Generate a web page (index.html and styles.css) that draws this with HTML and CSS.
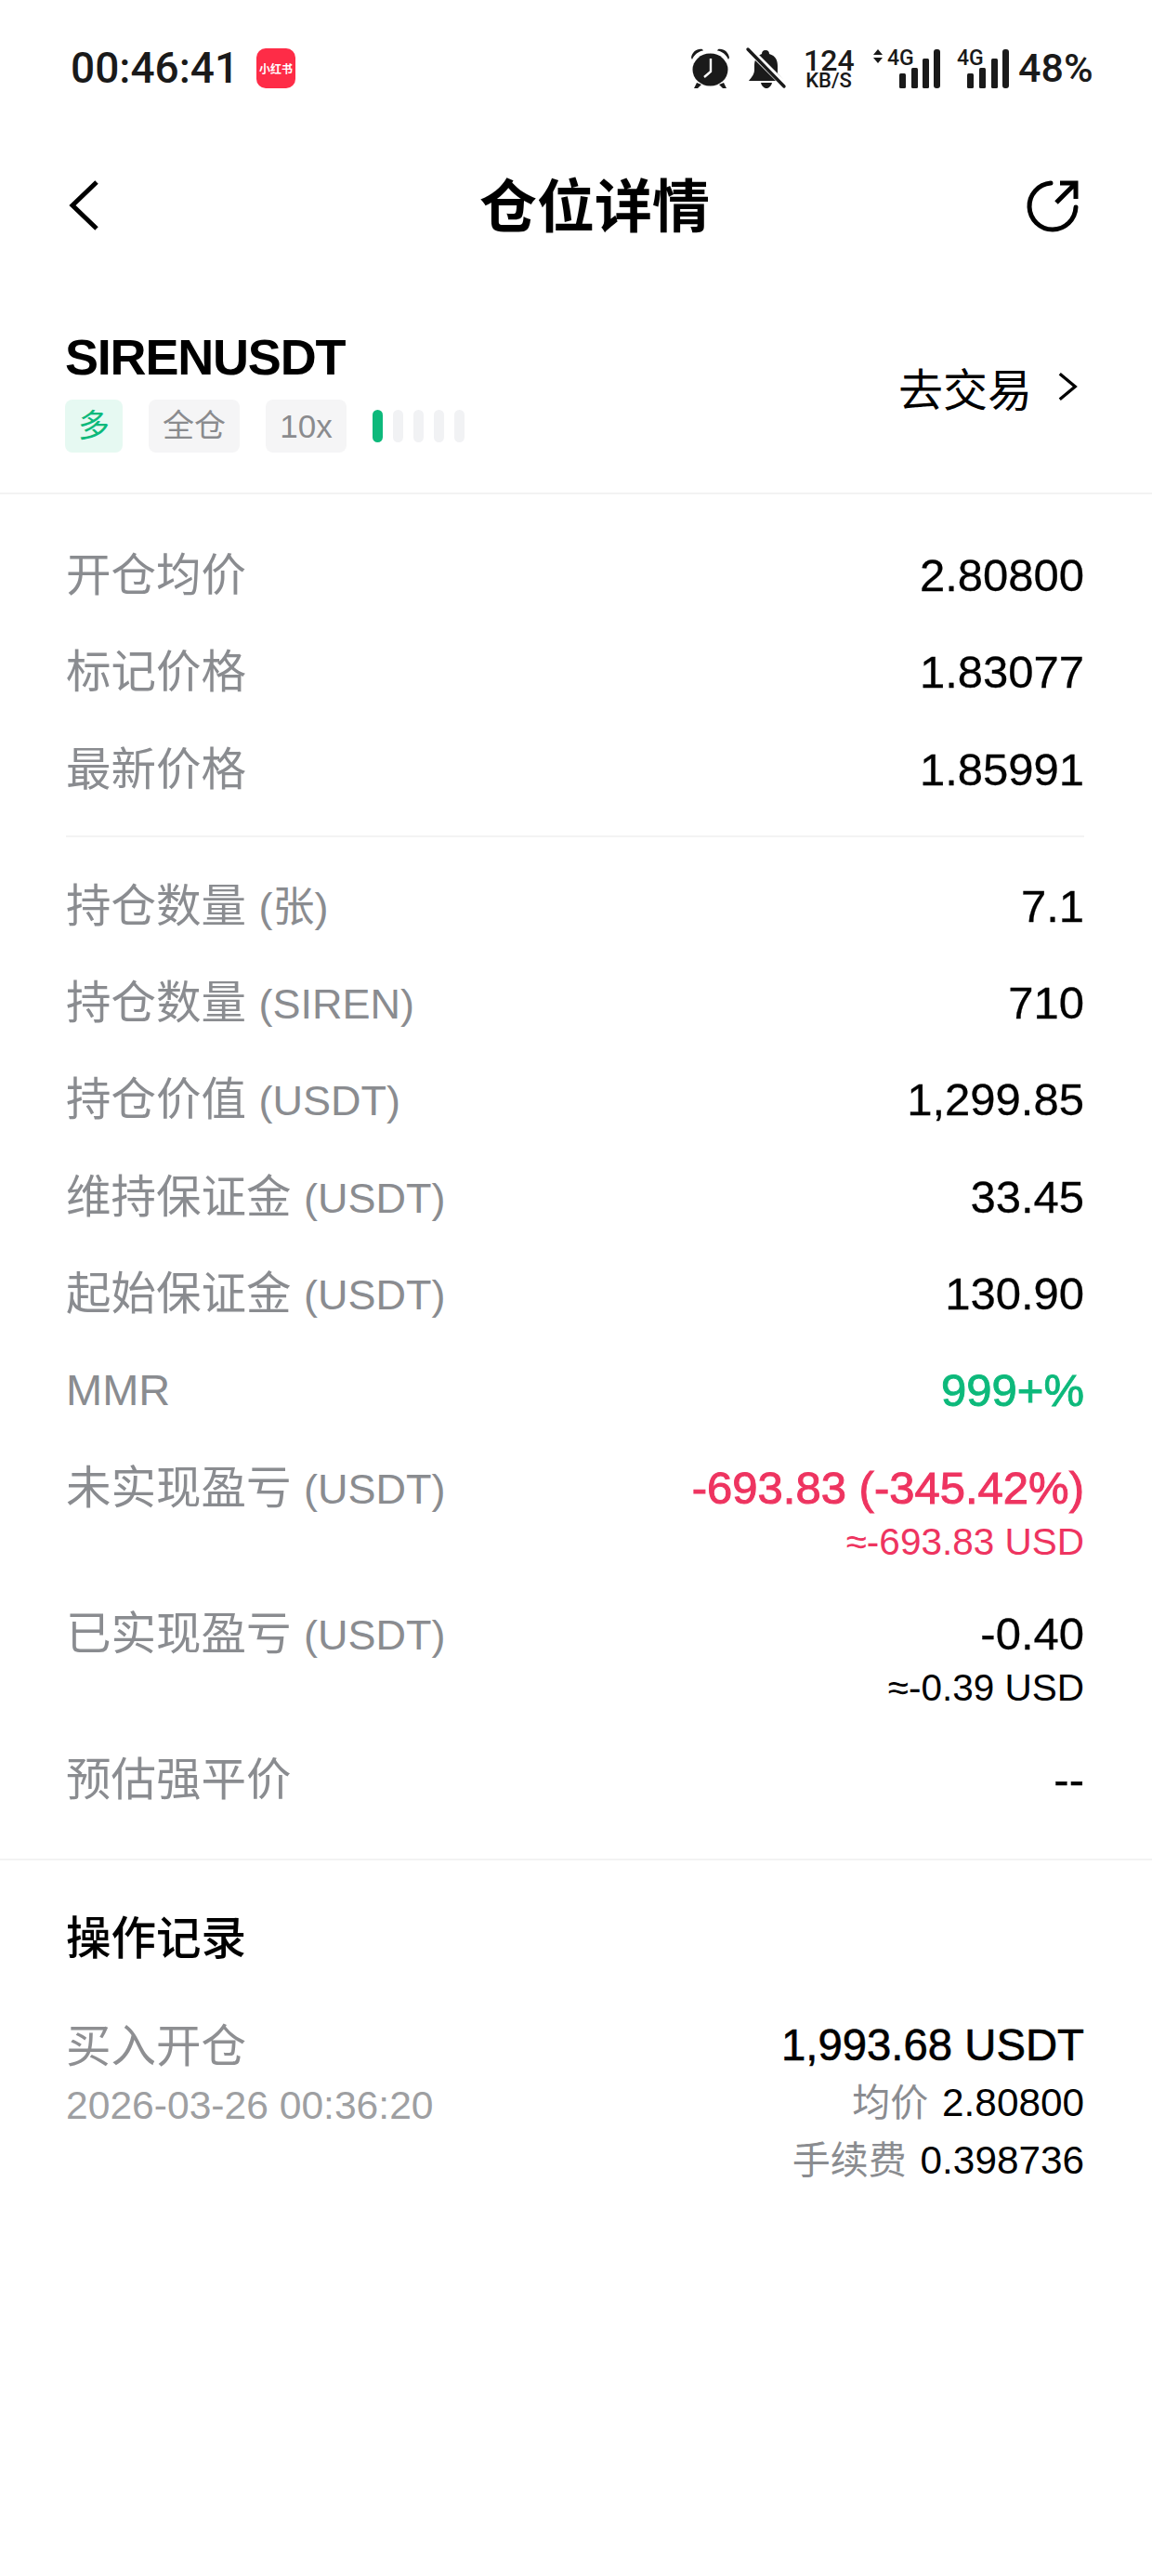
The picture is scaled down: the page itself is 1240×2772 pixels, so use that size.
FILE: index.html
```html
<!DOCTYPE html>
<html lang="zh-CN">
<head>
    <meta charset="UTF-8">
    <meta name="viewport" content="width=device-width, initial-scale=1.0">
    <title>仓位详情</title>
    <link rel="stylesheet" href="styles.css">
</head>
<body>
    <div class="statusBar">
        <div class="statusLeft">
            <span class="hora">00:46:41</span>
            <span class="appIcono">小红书</span>
        </div>
        <div class="statusRight">
            <svg class="icoAlarma" viewBox="0 0 43 43" width="43" height="43">
                <path d="M1 10C2 4 7 0 13 1L14 2.5C9 3 4 7 2 12Z" fill="#1a1a1a"/>
                <path d="M42 10C41 4 36 0 30 1L29 2.5C34 3 39 7 41 12Z" fill="#1a1a1a"/>
                <ellipse cx="21.5" cy="23" rx="19" ry="17.5" fill="#1a1a1a"/>
                <path d="M7 37L4 43H8L12 39ZM36 37L39 43H35L31 39Z" fill="#1a1a1a"/>
                <path d="M22 11V25L15 31" fill="none" stroke="#fff" stroke-width="2.4"/>
            </svg>
            <svg class="icoCampana" viewBox="0 0 42 43" width="42" height="43">
                <path d="M20 2C23 2 24 4 24 6C31 8 33 13 33 19V27L40 35H2C5 31 8 28 8 23V19C8 13 10 8 16 6C16 4 17 2 20 2Z" fill="#1a1a1a"/>
                <path d="M15 37H27C26 41 23 43 21 43S16 41 15 37Z" fill="#1a1a1a"/>
                <path d="M-2 -3L43 42" stroke="#fff" stroke-width="7"/>
                <path d="M1 1L40 41" stroke="#1a1a1a" stroke-width="3.4" stroke-linecap="round"/>
            </svg>
            <div class="velocidad">
                <div class="velNum">124</div>
                <div class="velUni">KB/S</div>
            </div>
            <svg class="icoSenal" viewBox="0 0 74 43" width="74" height="43">
                <path d="M6 1L11 7H1ZM6 16L11 10H1Z" fill="#1a1a1a"/>
                <text x="16" y="18" class="svgFuerte">4G</text>
                <rect x="29" y="27" width="7" height="16" rx="1.5" fill="#1a1a1a"/>
                <rect x="42" y="21" width="7" height="22" rx="1.5" fill="#1a1a1a"/>
                <rect x="54" y="11" width="7" height="32" rx="1.5" fill="#1a1a1a"/>
                <rect x="66" y="1" width="7" height="42" rx="3" fill="#1a1a1a"/>
            </svg>
            <svg class="icoSenal2" viewBox="0 0 56 43" width="56" height="43">
                <text x="0" y="18" class="svgFuerte">4G</text>
                <rect x="11" y="27" width="7" height="16" rx="1.5" fill="#1a1a1a"/>
                <rect x="24" y="21" width="7" height="22" rx="1.5" fill="#1a1a1a"/>
                <rect x="37" y="11" width="7" height="32" rx="1.5" fill="#1a1a1a"/>
                <rect x="49" y="1" width="7" height="42" rx="3" fill="#1a1a1a"/>
            </svg>
            <span class="bateria">48%</span>
        </div>
    </div>

    <div class="navBar">
        <svg viewBox="0 0 32 54" width="32" height="54">
            <path d="M29 2L3 27L29 52" fill="none" stroke="#000" stroke-width="5"/>
        </svg>
        <h1 class="titulo">仓位详情</h1>
        <svg viewBox="0 0 56 54" width="56" height="54">
            <path d="M24 3A25 25 0 1 0 51 29" fill="none" stroke="#000" stroke-width="5" stroke-linecap="round"/>
            <path d="M30 24L49 5M34 3H51V20" fill="none" stroke="#000" stroke-width="5"/>
        </svg>
    </div>

    <div class="cabecera">
        <div>
            <div class="simbolo">SIRENUSDT</div>
            <div class="etiquetas">
                <span class="etiqueta verde">多</span>
                <span class="etiqueta ancha">全仓</span>
                <span class="etiqueta apal">10x</span>
                <span class="barras">
                    <i class="activa"></i><i></i><i></i><i></i><i></i>
                </span>
            </div>
        </div>
        <div class="irTrade">
            <span>去交易</span>
            <svg viewBox="0 0 24 34" width="22" height="32">
                <path d="M3 2L21 17L3 32" fill="none" stroke="#000" stroke-width="3.6"/>
            </svg>
        </div>
    </div>

    <div class="detalle">
        <div class="fila"><span class="lbl">开仓均价</span><span class="val">2.80800</span></div>
        <div class="fila"><span class="lbl">标记价格</span><span class="val">1.83077</span></div>
        <div class="fila"><span class="lbl">最新价格</span><span class="val">1.85991</span></div>
        <div class="separador"></div>
        <div class="fila"><span class="lbl">持仓数量 <span class="lat">(张)</span></span><span class="val">7.1</span></div>
        <div class="fila"><span class="lbl">持仓数量 <span class="lat">(SIREN)</span></span><span class="val">710</span></div>
        <div class="fila"><span class="lbl">持仓价值 <span class="lat">(USDT)</span></span><span class="val">1,299.85</span></div>
        <div class="fila"><span class="lbl">维持保证金 <span class="lat">(USDT)</span></span><span class="val">33.45</span></div>
        <div class="fila"><span class="lbl">起始保证金 <span class="lat">(USDT)</span></span><span class="val">130.90</span></div>
        <div class="fila"><span class="lbl mmr">MMR</span><span class="val ganancia">999+%</span></div>
        <div class="fila">
            <span class="lbl">未实现盈亏 <span class="lat">(USDT)</span></span>
            <div class="valores perdida">
                <div class="val medio">-693.83 (-345.42%)</div>
                <div class="sub">≈-693.83 USD</div>
            </div>
        </div>
        <div class="fila">
            <span class="lbl">已实现盈亏 <span class="lat">(USDT)</span></span>
            <div class="valores">
                <div class="val">-0.40</div>
                <div class="sub">≈-0.39 USD</div>
            </div>
        </div>
        <div class="fila"><span class="lbl">预估强平价</span><span class="val">--</span></div>
    </div>

    <div class="registro">
        <h2 class="regTitulo">操作记录</h2>
        <div class="regFila">
            <div>
                <div class="regTipo">买入开仓</div>
                <div class="regFecha">2026-03-26 00:36:20</div>
            </div>
            <div class="regDatos">
                <div class="regMonto">1,993.68 USDT</div>
                <div class="regLinea"><span>均价</span> 2.80800</div>
                <div class="regLinea"><span>手续费</span> 0.398736</div>
            </div>
        </div>
    </div>
</body>
</html>
```

FILE: styles.css
```css
* {
    box-sizing: border-box;
}
body {
    margin: 0;
    background-color: #fff;
    color: #000;
    font-family: "Liberation Sans", "Noto Sans CJK SC", sans-serif;
}
svg {
    overflow: visible;
}

/* barra de estado */
.statusBar {
    display: flex;
    justify-content: space-between;
    align-items: center;
    height: 146px;
    padding: 0 67px 0 76px;
    color: #1a1a1a;
    font-family: Roboto, sans-serif;
    font-weight: 500;
}
.statusLeft,
.statusRight {
    display: flex;
    align-items: center;
}
.hora {
    width: 200px;
    font-size: 46px;
    white-space: nowrap;
}
.appIcono {
    width: 42px;
    height: 43px;
    border-radius: 10px;
    background-color: #fe2c47;
    color: #fff;
    font-family: "Noto Sans CJK SC", sans-serif;
    font-size: 12px;
    font-weight: 700;
    line-height: 43px;
    text-align: center;
    white-space: nowrap;
}
.svgFuerte {
    font-family: Roboto, sans-serif;
    font-size: 23px;
    font-weight: 500;
    fill: #1a1a1a;
}
.icoCampana {
    margin-left: 18px;
}
.velocidad {
    width: 54px;
    margin-left: 19px;
    text-align: center;
}
.velNum {
    font-size: 32px;
    line-height: 26px;
}
.velUni {
    font-size: 22px;
    line-height: 17px;
}
.icoSenal {
    margin-left: 20px;
}
.icoSenal2 {
    margin-left: 17px;
}
.bateria {
    width: 77px;
    margin-left: 10px;
    font-size: 43px;
    white-space: nowrap;
}

/* barra de titulo */
.navBar {
    display: flex;
    justify-content: space-between;
    align-items: center;
    height: 150px;
    padding: 0 77px 0 75px;
}
.titulo {
    flex: 1;
    margin: 0;
    padding: 0 0 6px 66px;
    font-size: 62px;
    font-weight: 700;
    text-align: center;
}

.cabecera {
    display: flex;
    justify-content: space-between;
    align-items: center;
    height: 236px;
    padding: 56px 80px 43px 70px;
    border-bottom: 2px solid #f3f3f3;
}
.simbolo {
    font-size: 54px;
    font-weight: 700;
    line-height: 64px;
    letter-spacing: -1.2px;
}
.etiquetas {
    display: flex;
    align-items: center;
    gap: 28px;
    margin-top: 14px;
}
.etiqueta {
    height: 57px;
    border-radius: 8px;
    background-color: #f5f5f6;
    color: #8a8b8e;
    font-size: 34px;
    line-height: 57px;
    text-align: center;
}
.verde {
    width: 62px;
    background-color: #e6f9f2;
    color: #0db97b;
}
.ancha {
    width: 98px;
}
.apal {
    width: 87px;
    font-size: 35px;
}
.barras {
    display: flex;
    gap: 11px;
}
.barras i {
    width: 11px;
    height: 35px;
    border-radius: 6px;
    background-color: #f1f2f4;
}
.barras .activa {
    background-color: #0db97b;
}
.irTrade {
    display: flex;
    align-items: center;
    gap: 27px;
    padding-bottom: 8px;
    font-size: 48px;
}

/* detalle */
.detalle {
    padding: 35px 73px 32px 71px;
    border-bottom: 2px solid #f3f3f3;
}
.fila {
    display: flex;
    justify-content: space-between;
    align-items: flex-start;
    padding: 20px 0;
    line-height: 64.3px;
}
.lbl {
    color: #8a8c90;
    font-size: 48.5px;
}
.lat {
    font-size: 45px;
    line-height: 1;
}
.mmr {
    font-size: 47px;
}
.val {
    font-size: 49px;
    -webkit-text-stroke: .3px currentColor;
}
.medio {
    -webkit-text-stroke: 1px currentColor;
}
.ganancia {
    color: #0db97b;
    -webkit-text-stroke: .9px currentColor;
}
.separador {
    height: 2px;
    margin: 19px 0 22px;
    background-color: #f3f3f3;
}
.valores {
    text-align: right;
}
.perdida {
    color: #ee3460;
}
.sub {
    font-size: 40.5px;
    line-height: 53px;
}

/* registro */
.registro {
    padding: 52px 73px 0 71px;
}
.regTitulo {
    margin: 0 0 52px;
    font-size: 48.5px;
    font-weight: 500;
    line-height: 64px;
}
.regFila {
    display: flex;
    justify-content: space-between;
    align-items: flex-start;
}
.regTipo {
    color: #8e8f92;
    font-size: 48.5px;
    line-height: 64px;
}
.regFecha {
    color: #9e9fa2;
    font-size: 42.6px;
    line-height: 62px;
}
.regDatos {
    text-align: right;
}
.regMonto {
    font-size: 47.3px;
    line-height: 62px;
    -webkit-text-stroke: .6px currentColor;
}
.regLinea {
    font-size: 42.3px;
    line-height: 62px;
}
.regLinea span {
    margin-right: 3px;
    color: #8a8c90;
    font-size: 41px;
}
```
